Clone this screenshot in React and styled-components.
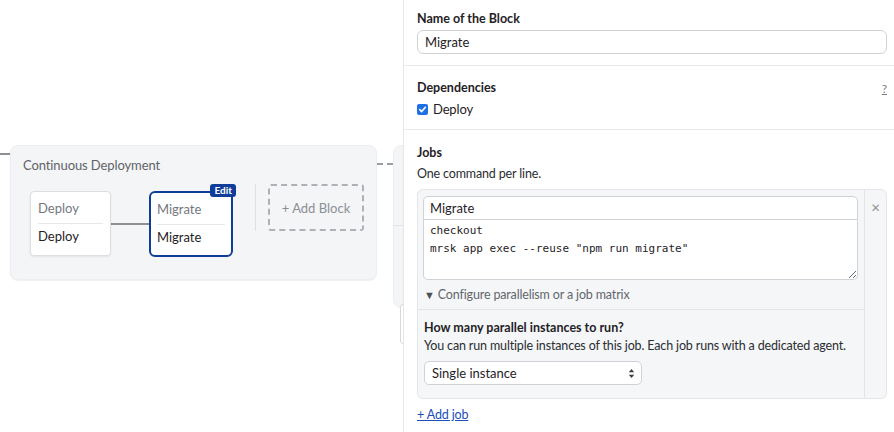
import styled, { createGlobalStyle } from 'styled-components';

const GlobalStyle = createGlobalStyle`
  html, body {
    margin: 0;
    padding: 0;
    background: #ffffff;
    font-family: Lato, "Noto Sans", sans-serif;
    color: #1f2226;
  }
  * {
    box-sizing: border-box;
  }
`;

const App = () => {
  return (
    <>
      <GlobalStyle />
      <Page>
        <Canvas>
          <LeadLine />
          <Stage>
            <StageTitle>Continuous Deployment</StageTitle>
            <BlockRow>
              <Block>
                <BlockName>Deploy</BlockName>
                <BlockJob>Deploy</BlockJob>
              </Block>
              <Connector />
              <Block selected>
                <EditBadge>Edit</EditBadge>
                <BlockName>Migrate</BlockName>
                <BlockJob>Migrate</BlockJob>
              </Block>
              <RowSeparator />
              <AddBlock>+ Add Block</AddBlock>
            </BlockRow>
          </Stage>
          <DashedConnector />
          <NextStage>
            <NextStageDivider />
          </NextStage>
          <DragHandle />
        </Canvas>

        <Panel>
          <Section>
            <Label>Name of the Block</Label>
            <TextInput defaultValue="Migrate" />
          </Section>

          <Section>
            <LabelRow>
              <Label>Dependencies</Label>
              <HelpLink href="#">?</HelpLink>
            </LabelRow>
            <CheckRow>
              <CheckBox>
                <svg width="9" height="9" viewBox="0 0 10 10">
                  <path
                    d="M2 5.2 L4.1 7.3 L8.2 2.6"
                    fill="none"
                    stroke="#ffffff"
                    strokeWidth="1.8"
                    strokeLinecap="round"
                    strokeLinejoin="round"
                  />
                </svg>
              </CheckBox>
              Deploy
            </CheckRow>
          </Section>

          <JobsSection>
            <Label>Jobs</Label>
            <Hint>One command per line.</Hint>
            <JobBox>
              <JobMain>
                <JobEditor>
                  <JobNameInput defaultValue="Migrate" />
                  <Commands
                    defaultValue={'checkout\nmrsk app exec --reuse "npm run migrate"'}
                    spellCheck={false}
                  />
                </JobEditor>
                <Toggle>
                  <Caret>▼</Caret>Configure parallelism or a job matrix
                </Toggle>
                <Parallel>
                  <Label>How many parallel instances to run?</Label>
                  <ParallelHint>
                    You can run multiple instances of this job. Each job runs with a dedicated agent.
                  </ParallelHint>
                  <SelectBox>
                    Single instance
                    <svg width="7" height="11" viewBox="0 0 7 11">
                      <path d="M3.5 1 L6.2 4.2 H0.8 Z" fill="#3a3d42" />
                      <path d="M3.5 10 L6.2 6.8 H0.8 Z" fill="#3a3d42" />
                    </svg>
                  </SelectBox>
                </Parallel>
              </JobMain>
              <JobSide>
                <RemoveButton>×</RemoveButton>
              </JobSide>
            </JobBox>
            <AddJob href="#">+ Add job</AddJob>
          </JobsSection>
        </Panel>
      </Page>
    </>
  );
};

export default App;

const Page = styled.div`
  display: flex;
  width: 894px;
  height: 432px;
  overflow: hidden;
`;

const Canvas = styled.div`
  position: relative;
  display: flex;
  align-items: flex-start;
  width: 403px;
  flex-shrink: 0;
  padding-top: 145px;
  overflow: hidden;
  background: #ffffff;
`;

const LeadLine = styled.div`
  width: 10px;
  height: 2px;
  margin-top: 8px;
  flex-shrink: 0;
  background: #8c8f94;
`;

const Stage = styled.div`
  width: 367px;
  height: 135px;
  flex-shrink: 0;
  padding: 10px 0 0 12px;
  background: #f4f5f7;
  border: 1px solid #eceef1;
  border-radius: 8px;
  box-shadow: 0 1px 1px rgba(0, 0, 0, 0.06);
`;

const StageTitle = styled.div`
  font-size: 13px;
  letter-spacing: -0.1px;
  line-height: 18px;
  color: #5f6368;
`;

const BlockRow = styled.div`
  display: flex;
  align-items: flex-start;
  margin-top: 10px;
  padding-left: 7px;
`;

const Block = styled.div`
  position: relative;
  width: ${(p) => (p.selected ? '84px' : '81px')};
  height: ${(p) => (p.selected ? '66px' : '65px')};
  margin-top: 7px;
  padding: 0 ${(p) => (p.selected ? '6px' : '7px')};
  background: #ffffff;
  border: ${(p) => (p.selected ? '2px solid #0f3d99' : '1px solid #dcdee2')};
  border-radius: ${(p) => (p.selected ? '6px' : '4px')};
  box-shadow: ${(p) => (p.selected ? 'none' : '0 1px 2px rgba(0, 0, 0, 0.08)')};
  font-size: 13px;
`;

const BlockName = styled.div`
  height: 32px;
  padding-top: 8px;
  line-height: 16px;
  color: #74787e;
  border-bottom: 1px solid #e6e8eb;
`;

const BlockJob = styled.div`
  padding-top: 4px;
  line-height: 16px;
  color: #1f2226;
`;

const EditBadge = styled.span`
  position: absolute;
  top: -9px;
  right: -5px;
  padding: 0 4px;
  height: 13px;
  line-height: 13px;
  font-size: 10px;
  font-weight: 700;
  color: #ffffff;
  background: #0f3d99;
  border-radius: 3px;
`;

const Connector = styled.div`
  width: 38px;
  height: 2px;
  margin-top: 39px;
  flex-shrink: 0;
  background: #8c8f94;
`;

const RowSeparator = styled.div`
  width: 1px;
  height: 47px;
  margin: 0 12px 0 22px;
  background: #dfe1e5;
`;

const AddBlock = styled.div`
  display: flex;
  align-items: center;
  justify-content: center;
  width: 96px;
  height: 47px;
  border: 2px dashed #aeb1b6;
  border-radius: 3px;
  font-size: 13px;
  color: #8b8f95;
`;

const DashedConnector = styled.div`
  width: 16px;
  margin-top: 18px;
  flex-shrink: 0;
  border-top: 2px dashed #9a9da2;
`;

const NextStage = styled.div`
  width: 120px;
  height: 163px;
  flex-shrink: 0;
  padding-top: 79px;
  background: #f4f5f7;
  border: 1px solid #eceef1;
  border-radius: 8px;
`;

const NextStageDivider = styled.div`
  height: 1px;
  background: #e3e5e8;
`;

const DragHandle = styled.div`
  position: absolute;
  top: 304px;
  right: -3px;
  width: 6px;
  height: 40px;
  background: #ffffff;
  border: 1px solid #d6d8dc;
  border-radius: 3px;
`;

const Panel = styled.div`
  flex: 1;
  border-left: 1px solid #e4e6e9;
  background: #ffffff;
  font-size: 12.5px;
  letter-spacing: -0.15px;
`;

const Section = styled.div`
  padding: 11px 7px 11px 13px;
  border-bottom: 1px solid #e8eaed;
  &:nth-child(2) {
    padding-top: 14px;
    padding-bottom: 12px;
  }
`;

const JobsSection = styled.div`
  padding: 15px 7px 0 13px;
`;

const Label = styled.div`
  font-size: 12.5px;
  letter-spacing: 0;
  line-height: 16px;
  font-weight: 700;
  color: #1f2226;
`;

const LabelRow = styled.div`
  display: flex;
  justify-content: space-between;
  align-items: center;
`;

const HelpLink = styled.a`
  margin-right: 0;
  font-size: 12px;
  color: #7b7f85;
  text-decoration: underline;
`;

const TextInput = styled.input`
  display: block;
  width: 100%;
  height: 24px;
  margin-top: 3px;
  padding: 0 7px;
  font: inherit;
  font-size: 13px;
  color: #1f2226;
  background: #ffffff;
  border: 1px solid #cfd3d8;
  border-radius: 6px;
  outline: none;
`;

const CheckRow = styled.label`
  display: flex;
  align-items: center;
  gap: 5px;
  margin-top: 5px;
  line-height: 16px;
  font-size: 13px;
`;

const CheckBox = styled.span`
  display: inline-flex;
  align-items: center;
  justify-content: center;
  width: 11px;
  height: 11px;
  background: #1f6fe5;
  border-radius: 2px;
`;

const Hint = styled.div`
  margin-top: 5px;
  line-height: 16px;
  color: #2a2d31;
`;

const JobBox = styled.div`
  display: flex;
  margin-top: 7px;
  background: #f5f6f8;
  border: 1px solid #e3e5e8;
  border-radius: 6px;
`;

const JobMain = styled.div`
  flex: 1;
`;

const JobEditor = styled.div`
  padding: 6px 6px 0 5px;
`;

const JobNameInput = styled.input`
  display: block;
  width: 100%;
  height: 24px;
  padding: 0 6px;
  font: inherit;
  font-size: 13px;
  color: #1f2226;
  background: #ffffff;
  border: 1px solid #cfd3d8;
  border-radius: 5px 5px 0 0;
  outline: none;
`;

const Commands = styled.textarea`
  display: block;
  width: 100%;
  height: 60px;
  margin: 0;
  padding: 2px 6px 0;
  font-family: "DejaVu Sans Mono", "Liberation Mono", monospace;
  font-size: 11px;
  letter-spacing: 0;
  line-height: 18px;
  color: #1f2226;
  background: #ffffff;
  border: 1px solid #cfd3d8;
  border-top: none;
  border-radius: 0 0 5px 5px;
  outline: none;
  resize: vertical;
`;

const Toggle = styled.div`
  padding: 7px 6px 6px;
  line-height: 16px;
  color: #62666c;
  border-bottom: 1px solid #e3e5e8;
`;

const Caret = styled.span`
  margin-right: 3px;
  font-size: 11px;
  color: #4d5156;
`;

const Parallel = styled.div`
  padding: 10px 6px 13px;
`;

const ParallelHint = styled.div`
  margin-top: 2px;
  line-height: 16px;
  white-space: nowrap;
  color: #2a2d31;
`;

const SelectBox = styled.div`
  display: flex;
  align-items: center;
  justify-content: space-between;
  width: 218px;
  height: 24px;
  margin-top: 7px;
  padding: 0 6px 0 7px;
  background: #ffffff;
  border: 1px solid #cfd3d8;
  border-radius: 5px;
  font-size: 13px;
  letter-spacing: 0;
  color: #1f2226;
`;

const JobSide = styled.div`
  width: 22px;
  flex-shrink: 0;
  display: flex;
  justify-content: center;
  border-left: 1px solid #e3e5e8;
`;

const RemoveButton = styled.span`
  margin-top: 9px;
  font-size: 15px;
  line-height: 16px;
  color: #8b8f95;
`;

const AddJob = styled.a`
  display: inline-block;
  margin-top: 8px;
  line-height: 16px;
  color: #1a4fb8;
  text-decoration: underline;
`;
